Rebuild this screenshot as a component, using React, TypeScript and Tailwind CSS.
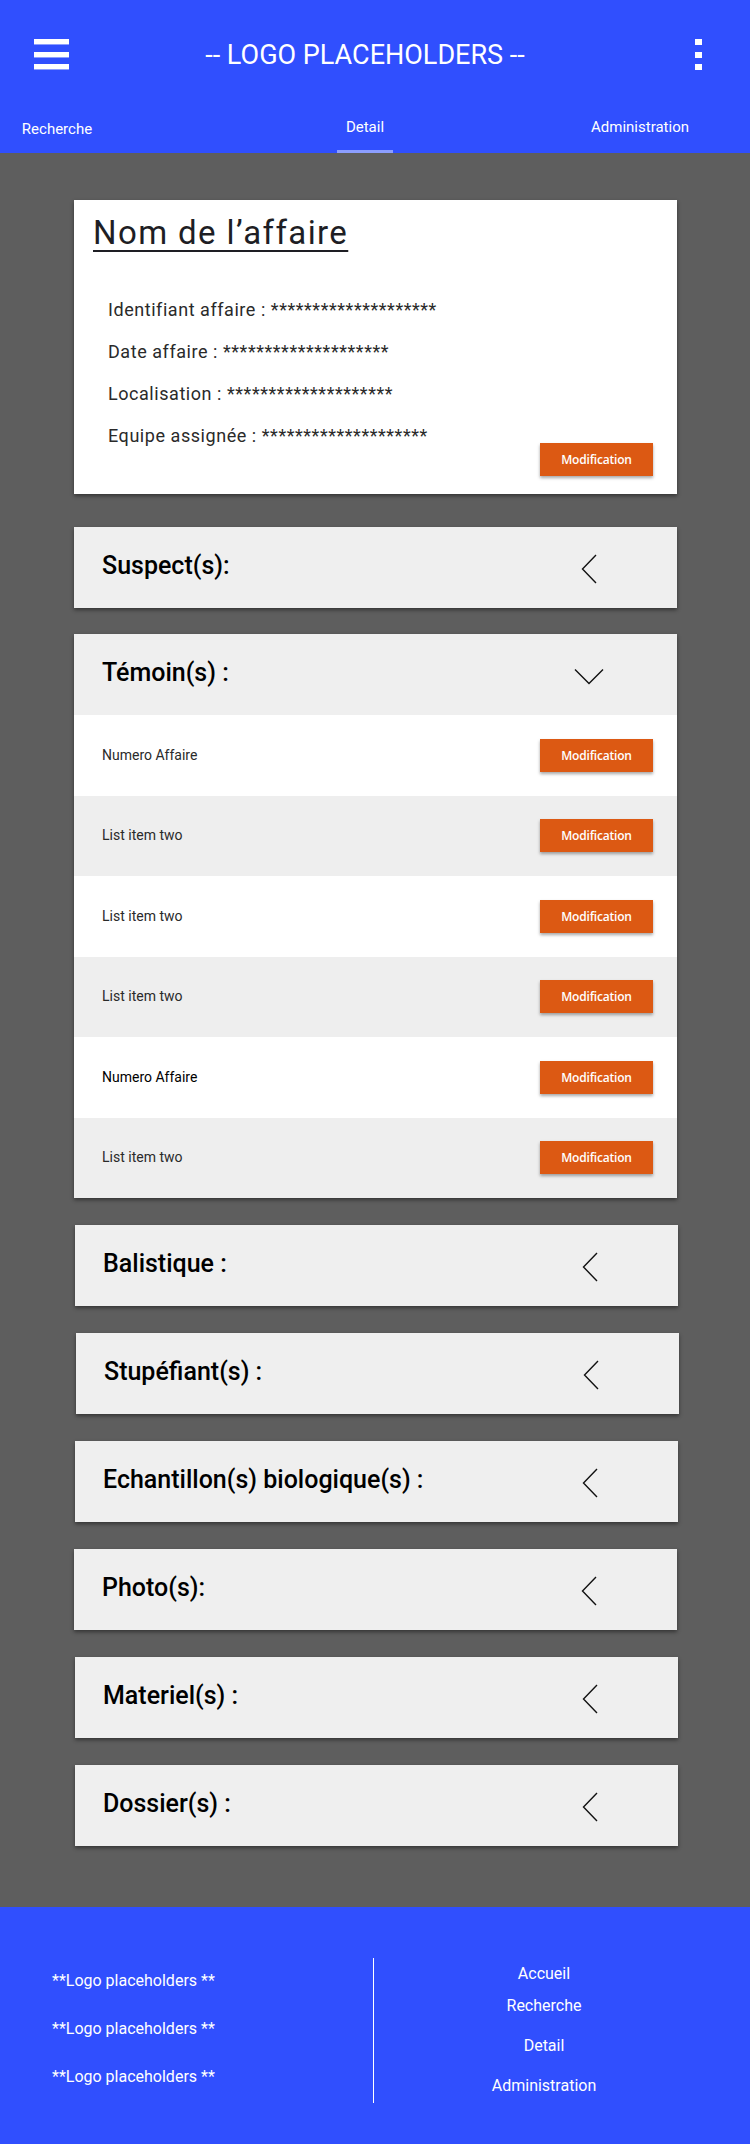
import React from 'react';

const witnesses = [
  { label: 'Numero Affaire', bg: 'bg-white', text: 'text-[#2a2a2a]' },
  { label: 'List item two', bg: 'bg-[#eeeeee]', text: 'text-[#2a2a2a]' },
  { label: 'List item two', bg: 'bg-white', text: 'text-[#2a2a2a]' },
  { label: 'List item two', bg: 'bg-[#eeeeee]', text: 'text-[#2a2a2a]' },
  { label: 'Numero Affaire', bg: 'bg-white', text: 'text-black' },
  { label: 'List item two', bg: 'bg-[#eeeeee]', text: 'text-[#2a2a2a]' },
];

const sections = [
  { title: 'Balistique :', cls: 'mt-[27px] ml-[75px]' },
  { title: 'Stupéfiant(s) :', cls: 'mt-[27px] ml-[76px]' },
  { title: 'Echantillon(s) biologique(s) :', cls: 'mt-[27px] ml-[75px]' },
  { title: 'Photo(s):', cls: 'mt-[27px] ml-[74px]' },
  { title: 'Materiel(s) :', cls: 'mt-[27px] ml-[75px]' },
  { title: 'Dossier(s) :', cls: 'mt-[27px] ml-[75px]' },
];

function ChevronLeft() {
  return (
    <svg width="16" height="30" viewBox="0 0 16 30" fill="none">
      <polyline points="15,1 1.5,15 15,29" stroke="#111" strokeWidth="1.4" />
    </svg>
  );
}

function ChevronDown() {
  return (
    <svg width="30" height="17" viewBox="0 0 30 17" fill="none">
      <polyline points="1,1.5 15,15.5 29,1.5" stroke="#111" strokeWidth="1.4" />
    </svg>
  );
}

function ModifButton() {
  return (
    <button className="block w-[113px] h-[33px] leading-[33px] bg-[#dc5913] text-white text-[12px] font-semibold font-['Open_Sans',sans-serif] tracking-[-0.2px] shadow-[0_2px_3px_rgba(0,0,0,0.35)]">
      Modification
    </button>
  );
}

function SectionHeader({ title, open }: { title: string; open?: boolean }) {
  return (
    <div className="h-[81px] flex items-center bg-[#efefef] pl-[28px]">
      <span className="flex-1 text-[25px] leading-[30px] font-medium text-black -mt-[4px]">{title}</span>
      {open ? (
        <div className="mr-[73px] mt-[3px]">
          <ChevronDown />
        </div>
      ) : (
        <div className="mr-[80px] mt-[3px]">
          <ChevronLeft />
        </div>
      )}
    </div>
  );
}

export default function App() {
  return (
    <div className="w-[750px] min-h-[2144px] bg-[#5e5e5e] font-[Roboto,sans-serif] flex flex-col">
      {/* Header */}
      <header className="bg-[#304ffe] h-[153px] flex flex-col">
        <div className="flex items-center h-[33px] mt-[38px]">
          <div className="ml-[34px] w-[35px] flex flex-col gap-[6.5px]">
            <span className="h-[6px] bg-white border-b border-[#8c9eff]" />
            <span className="h-[6px] bg-white border-b border-[#8c9eff]" />
            <span className="h-[6px] bg-white border-b border-[#8c9eff]" />
          </div>
          <div className="flex-1 text-center pr-[34px] text-white text-[27px] leading-[33px] mt-[1px]">
            -- LOGO PLACEHOLDERS --
          </div>
          <div className="mr-[48px] w-[7px] flex flex-col gap-[6.5px]">
            <span className="h-[6px] bg-white" />
            <span className="h-[6px] bg-white" />
            <span className="h-[6px] bg-white" />
          </div>
        </div>
        <nav className="flex mt-[46px] text-white text-[15px] leading-[20px]">
          <div className="w-[114px] text-center pt-[2px]">Recherche</div>
          <div className="ml-[201px] w-[100px] flex flex-col items-center">
            <span>Detail</span>
            <span className="mt-[13px] w-[56px] h-[3px] bg-[#8c9eff]" />
          </div>
          <div className="ml-[160px] w-[130px] text-center">Administration</div>
        </nav>
      </header>

      {/* Main */}
      <main className="flex flex-col pt-[47px] pb-[61px]">
        {/* Info card */}
        <section className="ml-[74px] w-[603px] h-[294px] bg-white shadow-[0_2px_4px_rgba(0,0,0,0.45)] pt-[14px] pl-[19px] pr-[24px] flex flex-col">
          <h1 className="text-[33px] leading-[38px] text-[#1e1e24] tracking-[1.4px] underline decoration-[1.5px] underline-offset-[6px]">
            Nom de l’affaire
          </h1>
          <div className="mt-[37px] pl-[15px] text-[18px] leading-[42px] text-[#2a2a2a] tracking-[0.55px] flex flex-col">
            <span>Identifiant affaire : ********************</span>
            <span>Date affaire : ********************</span>
            <span>Localisation : ********************</span>
            <div className="flex items-start justify-between">
              <span>Equipe assignée : ********************</span>
              <div className="mt-[28px] flex">
                <ModifButton />
              </div>
            </div>
          </div>
        </section>

        {/* Suspects */}
        <section className="mt-[33px] ml-[74px] w-[603px] shadow-[0_2px_4px_rgba(0,0,0,0.45)]">
          <SectionHeader title="Suspect(s):" />
        </section>

        {/* Temoins */}
        <section className="mt-[26px] ml-[74px] w-[603px] shadow-[0_2px_4px_rgba(0,0,0,0.45)]">
          <SectionHeader title="Témoin(s) :" open />
          {witnesses.map((w, i) => (
            <div key={i} className={`h-[80.5px] flex items-center justify-between pl-[28px] pr-[24px] ${w.bg}`}>
              <span className={`text-[14px] ${w.text}`}>{w.label}</span>
              <ModifButton />
            </div>
          ))}
        </section>

        {sections.map((s) => (
          <section key={s.title} className={`${s.cls} w-[603px] shadow-[0_2px_4px_rgba(0,0,0,0.45)]`}>
            <SectionHeader title={s.title} />
          </section>
        ))}
      </main>

      {/* Footer */}
      <footer className="bg-[#304ffe] h-[237px] flex pt-[51px] text-white text-[16px]">
        <div className="w-[373px] pl-[52px] flex flex-col leading-[48px] -mt-[1px]">
          <span>**Logo placeholders **</span>
          <span>**Logo placeholders **</span>
          <span>**Logo placeholders **</span>
        </div>
        <div className="w-[1px] h-[145px] bg-white" />
        <div className="w-[340px] flex flex-col items-center">
          <span className="leading-[32px]">Accueil</span>
          <span className="leading-[32px]">Recherche</span>
          <span className="leading-[40px] mt-[4px]">Detail</span>
          <span className="leading-[40px]">Administration</span>
        </div>
      </footer>
    </div>
  );
}
